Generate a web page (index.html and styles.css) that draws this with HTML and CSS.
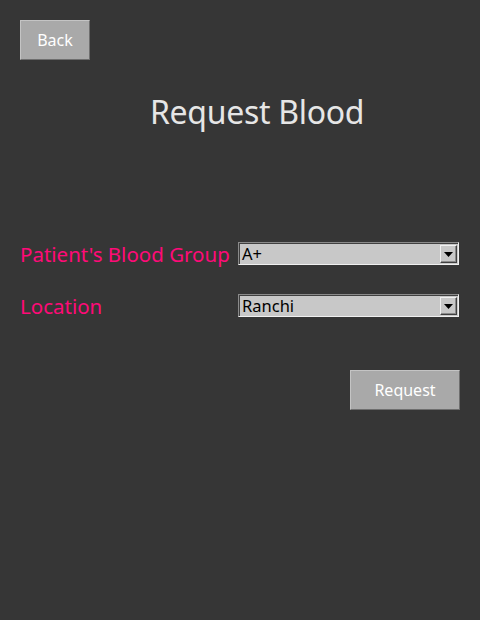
FILE: index.html
```html
<!DOCTYPE html>
<html>
<head>
<meta charset="utf-8">
<link rel="stylesheet" href="styles.css">
</head>
<body>
<div class="page">
  <div class="top"><button class="btn back">Back</button></div>
  <h1 class="title">Request Blood</h1>
  <div class="form">
    <div class="row">
      <label class="label">Patient's Blood Group</label>
      <div class="select"><span class="value">A+</span><span class="arrow"><svg width="9" height="5" viewBox="0 0 9 5"><path d="M0 0H9L4.5 5Z" fill="#000"/></svg></span></div>
    </div>
    <div class="row">
      <label class="label">Location</label>
      <div class="select"><span class="value">Ranchi</span><span class="arrow"><svg width="9" height="5" viewBox="0 0 9 5"><path d="M0 0H9L4.5 5Z" fill="#000"/></svg></span></div>
    </div>
  </div>
  <div class="actions"><button class="btn request">Request</button></div>
</div>
</body>
</html>
```
FILE: styles.css
```css
html, body { margin: 0; padding: 0; }
body {
  width: 480px; height: 620px;
  background: #363636;
  font-family: "Noto Sans", "DejaVu Sans", sans-serif;
  overflow: hidden;
}
.page { padding: 20px; }
.top { display: flex; }
.btn {
  font-family: "Noto Sans", sans-serif;
  font-size: 16px;
  color: #ffffff;
  background: #a9a9a9;
  border: 1px solid;
  border-color: #c4c4c4 #6e6e6e #6e6e6e #c4c4c4;
  height: 40px;
  padding: 0;
}
.back { width: 70px; }
.title {
  margin: 30px 0 0 130px;
  font-weight: normal;
  font-size: 32px;
  line-height: 44px;
  color: #e6e6e6;
  letter-spacing: -0.3px;
}
.form { margin-top: 108px; display: flex; flex-direction: column; gap: 29px; }
.row { display: flex; align-items: center; height: 23px; }
.label {
  width: 218px;
  color: #ff0a78;
  font-size: 20.5px;
  letter-spacing: 0;
  white-space: nowrap;
}
.select {
  position: relative;
  box-sizing: border-box;
  width: 221px; height: 23px;
  background: #c8c8c8;
  border: 1px solid;
  border-color: #8a8a8a #f0f0f0 #f0f0f0 #8a8a8a;
  box-shadow: inset 1px 1px 0 #404040;
  display: flex; align-items: center;
}
.value {
  padding-left: 3px;
  font-size: 16.5px;
  color: #000;
  line-height: 20px;
}
.arrow {
  position: absolute;
  right: 1px; top: 2px;
  box-sizing: border-box;
  width: 17px; height: 18px;
  background: #c8c8c8;
  border: 1px solid;
  border-color: #f0f0f0 #404040 #404040 #f0f0f0;
  box-shadow: inset -1px -1px 0 #8a8a8a;
  display: flex; align-items: center; justify-content: center;
}
.arrow svg { display: block; margin-top: 1px; }
.actions { display: flex; justify-content: flex-end; margin-top: 53px; }
.request { width: 110px; }
```
